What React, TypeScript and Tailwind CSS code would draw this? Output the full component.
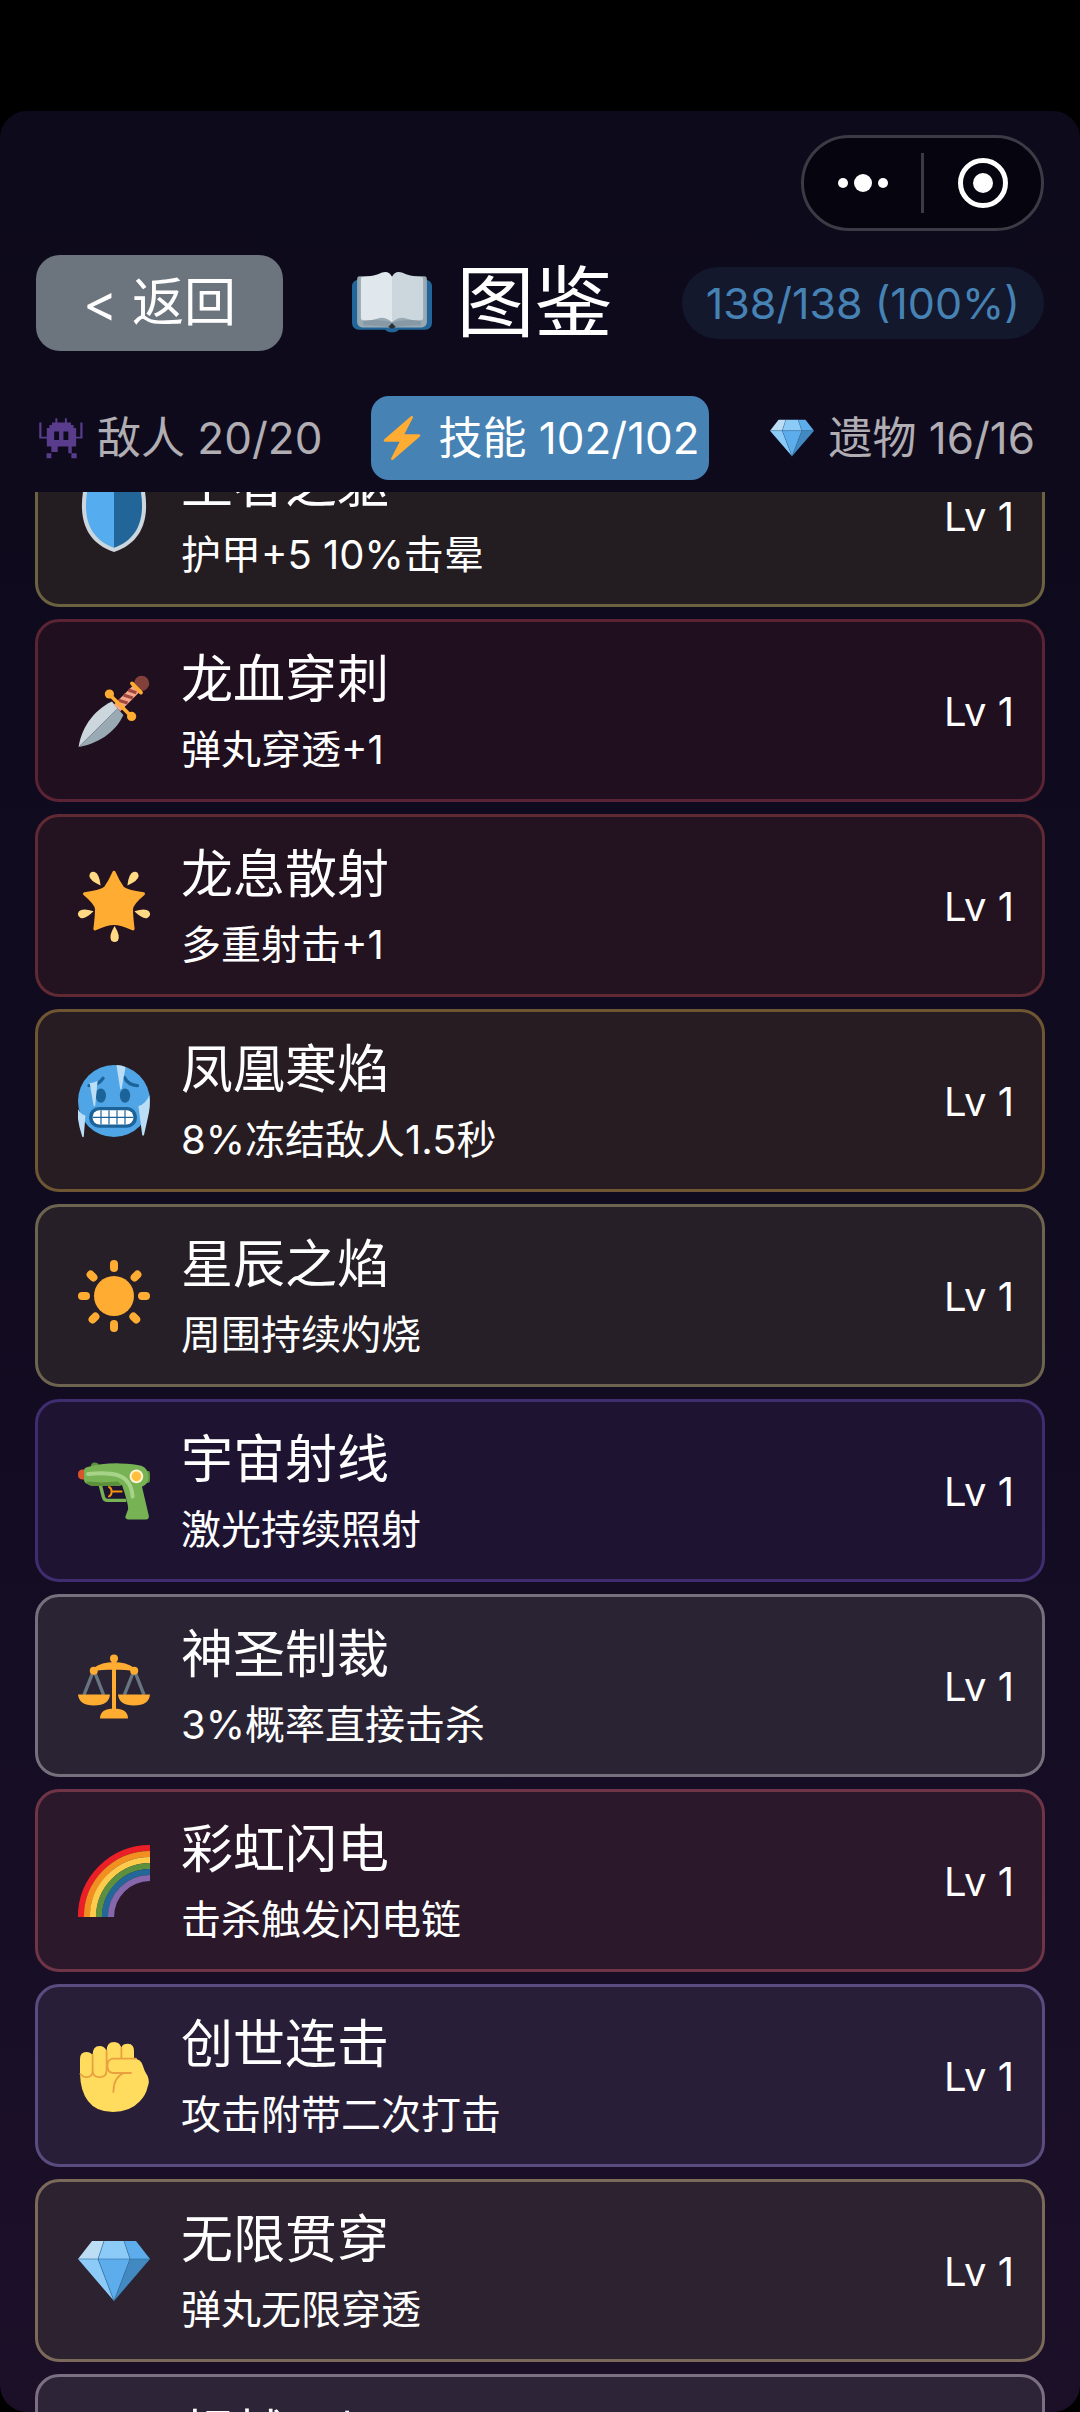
import { ReactNode, useState } from 'react'
import clsx from 'clsx'

function Emoji({ className, children }: { className?: string; children: ReactNode }) {
  return (
    <svg viewBox="0 0 36 36" className={clsx('shrink-0 overflow-visible', className)} aria-hidden="true">
      {children}
    </svg>
  )
}

const gem = (
  <>
    <path fill="#BDDDF4" d="M13 3H7l-7 9h10z" />
    <path fill="#5DADEC" d="M36 12l-7-9h-6l3 9z" />
    <path fill="#4289C1" d="M26 12h10L18 33z" />
    <path fill="#8CCAF7" d="M10 12H0l18 21zm3-9l-3 9h16l-3-9z" />
    <path fill="#5DADEC" d="M18 33l-8-21h16z" />
    <path fill="none" stroke="#2F6F9F" strokeWidth=".3" d="M0 12h36M13 3l-3 9 8 21 8-21-3-9" />
  </>
)

const zap = (
  <path
    fill="#FFAC33"
    d="M32.938 15.651C32.792 15.26 32.418 15 32 15H19.925L26.89 1.458c.219-.426.106-.947-.271-1.243C26.437.071 26.218 0 26 0c-.233 0-.466.082-.653.243L18 6.588 3.347 19.243c-.316.273-.43.714-.284 1.105S3.582 21 4 21h12.075L9.11 34.542c-.219.426-.106.947.271 1.243.182.144.401.215.619.215.233 0 .466-.082.653-.243L18 29.412l14.653-12.655c.317-.273.43-.714.285-1.106z"
  />
)

const monster = (
  <>
    <path
      fill="#593C8C"
      d="M13.4 1.8H15v3.6h6.2V1.8h1.6v3.6h3.4v2h2.1v2.4h2.1V17h3.4V5.4h1.8v13.1h-5.2V25h-3.6v5.5h4v4h-4.3v-4h-2.5V25h-3.2-4.3-1.2v4.5H10.1v5H6.2v-4h3.900V25H6.4v-6.5H.2V5.4H2V17h4.4V9.8h2.1V7.4h2.1v-2h2.8z"
    />
    <path fill="#0d0a1c" d="M12.400 12.600h4v7h-4zM20 12.600h4v7h-4z" />
  </>
)

const book = (
  <>
    <path fill="#226699" d="M3 7.5h30a3 3 0 0 1 3 3V27a3 3 0 0 1-3 3H21q-1 1.2-3 1.2T15 30H3a3 3 0 0 1-3-3V10.500a3 3 0 0 1 3-3z" />
    <path fill="#99AAB5" d="M3.500 6H18v23H4.500Q2.300 28.500 2.300 26.500V7.500Q2.300 6 3.500 6zM32.500 6H18v23h13.500q2.200-.5 2.200-2.500v-19Q33.700 6 32.500 6z" />
    <path fill="#8899A6" d="M5 25.500q8 0 13 1v2.700q-5-1.200-13-1.200zM31 25.500q-8 0-13 1v2.700q5-1.200 13-1.200z" />
    <path fill="#E1E8ED" d="M4 7.200Q4 6.200 5.500 6.200 10 6 13.500 4.300 16.700 3.300 18 6.300V26.800Q16 24.500 12.500 24.700 9 25.800 5.500 25.900 4 25.800 4 24.500z" />
    <path fill="#CCD6DD" d="M32 7.200q0-1-1.500-1Q26 6 22.500 4.300 19.300 3.300 18 6.300V26.800q2-2.300 5.500-2.100 3.500 1.100 7 1.200 1.500-.1 1.500-1.400z" />
    <path fill="#292F33" d="M18 27l1.700 1.800L18 29.600l-1.700-.8z" />
  </>
)

const shield = (
  <>
    <path fill="#CCD6DD" d="M33 3c-7-3-15-3-15-3S10 0 3 3C0 18 3 31 18 36c15-5 18-18 15-33z" />
    <path fill="#55ACEE" d="M18 33.900C6.400 29.700 2 19.800 4.800 4.400 11 2 18 2 18 2z" />
    <path fill="#226699" d="M18 33.900C29.600 29.700 34 19.800 31.200 4.400 25 2 18 2 18 2z" />
  </>
)

const dagger = (
  <>
    <path fill="#CCD6DD" d="M.3 36C1.500 27.500 7 18 17 13.300l2.800 3.400z" />
    <path fill="#99AAB5" d="M.3 36C9.500 34.500 18.500 29 22.700 20l-2.900-3.300z" />
    <path stroke="#F4A68A" strokeWidth="4.600" d="M19.500 16.500L29 7" />
    <path stroke="#A0483F" strokeWidth="1.600" d="M20.200 12.600l4.600 1.400M22.800 10l4.600 1.500M25.200 7.500l4 1.400" />
    <circle cx="31.800" cy="4.200" r="3.800" fill="#82403A" />
    <path stroke="#FFAC33" strokeWidth="1.900" strokeLinecap="round" d="M27 4.200l4.500 4.600M16 10l10.500 10.500" />
    <circle cx="15.700" cy="9.500" r="2.300" fill="#FFAC33" />
    <circle cx="26.800" cy="20.700" r="2.300" fill="#FFAC33" />
  </>
)

const drop = 'M0 0Q3 5 1.700 7.100 0 9-1.700 7.100-3 5 0 0z'

const star = (
  <>
    <path
      fill="#FFAC33"
      stroke="#FFAC33"
      strokeWidth="1.600"
      strokeLinejoin="round"
      d="M18 1.200Q20 5.800 22.300 9 24.200 10.800 32.700 11.900q-6 5-6 7.800 0 3 .8 9.700-6-2.700-9.500-2.700t-9.500 2.700q.8-6.700.8-9.700 0-2.800-6-7.800 8.500-1.100 10.400-2.900Q16 5.800 18 1.200z"
    />
    <g fill="#FFD983">
      <path d={drop} transform="translate(11.300 7.700) rotate(143)" />
      <path d={drop} transform="translate(24.700 7.700) rotate(-143)" />
      <path d={drop} transform="translate(7.800 20.600) rotate(76)" />
      <path d={drop} transform="translate(28.200 20.600) rotate(-76)" />
      <path d={drop} transform="translate(18.300 28)" />
    </g>
  </>
)

const coldFace = (
  <>
    <circle cx="18" cy="18" r="18" fill="#50A5E6" />
    <ellipse cx="11.400" cy="15.300" rx="2.600" ry="3.600" fill="#1C6399" />
    <ellipse cx="23.500" cy="15.300" rx="2.600" ry="3.600" fill="#1C6399" />
    <path fill="none" stroke="#1C6399" strokeWidth="1.700" strokeLinecap="round" d="M5.500 10.300Q10 10.300 12.500 6.700M23.200 6.300Q25 10 29.700 10.300" />
    <rect x="5.500" y="21" width="24" height="10.400" rx="5" fill="#1C6399" />
    <rect x="7.300" y="22.600" width="20.400" height="7.200" rx="3.400" fill="#fff" />
    <path stroke="#1C6399" strokeWidth=".6" d="M7.300 26.200h20.400M11.500 22.600v7.200M15.500 22.600v7.200M19.500 22.600v7.200M23.500 22.600v7.200" />
    <path
      fill="#BBDDF5"
      d="M5.800 8.900q2 .3 4-1L8.600 20.200q-.4.800-.8 0zM19.200 0q2.500 0 4.600 1l-2 11q-.4.600-.7 0zM0 22q1 2.300 3.700 3.300l-.8 10.500q-.4.600-.8 0Q.5 31 0 27zM30.200 20.500Q34 19.500 35.700 15q.6 6-.7 11l-2 9q-.5.700-.9 0z"
    />
  </>
)

const sun = (
  <>
    <circle cx="18" cy="18" r="10" fill="#FFAC33" />
    <path
      stroke="#FFAC33"
      strokeWidth="4"
      strokeLinecap="round"
      d="M18 2v2M18 32v2M2 18h2M32 18h2M6.300 7.300l1.400 1.400M27.700 28.300l1.400 1.400M29.700 7.300l-1.400 1.400M8.700 28.300l-1.400 1.400"
    />
  </>
)

const gun = (
  <>
    <path fill="#5C913B" d="M6.500 5.500q0-1.800 1.800-1.800T10.500 5l-1 1zM33 8h2.200q.8 0 .8 1.200v3.600q0 1-1 1.200h-2z" />
    <path fill="none" stroke="#77B255" strokeWidth="1.700" strokeLinejoin="round" d="M11 14.500l1.700 6.500q.5 1.700 2 1.700h9.500" />
    <path fill="none" stroke="#F4900C" strokeWidth="1" strokeLinecap="round" d="M15.500 16q1.300.4 1.300 2.300t-1.300 2.400M16.800 18.300h5" />
    <path fill="#D9542B" d="M3.500 7.300H2Q0 7.500 0 9.800T2 12.200h1.500z" />
    <path
      fill="#77B255"
      d="M4 6.200Q12 4 21 4.200q7 0 11 1.300 3.200 1.500 3.300 5.500 0 3.500-3.300 4.900l3.400 14.500q.2 1.800-1.400 1.800h-9q-1.700-.2-1.200-1.700l1.300-3.500q0-3-3.100-12H7q-3.800-.3-4-2.500V8q0-1.400 1-1.800z"
    />
    <path fill="#5C913B" d="M4 13.300q8 .8 16 0l1.800 2-1 .2H7q-2.200-.2-3-2.200z" />
    <path fill="none" stroke="#A6D388" strokeWidth="2" strokeLinecap="round" d="M5 9.500q15-1.500 19 3 3 3 3.300 8.300" />
    <circle cx="29.200" cy="10.700" r="3.400" fill="#FFF3D0" />
    <circle cx="29.200" cy="10.700" r="2.400" fill="#FFBE3D" />
  </>
)

const scales = (
  <>
    <path fill="none" stroke="#66757F" strokeWidth="1.700" d="M7.300 11.500L3 22.400M8.500 11.500l4.300 10.900M27.500 11.500l-4.300 10.900M28.700 11.500L33 22.400" />
    <path
      fill="#FFAC33"
      d="M0 22.200h16q-.5 5.500-8 5.500t-8-5.500zM20 22.200h16q-.5 5.500-8 5.500t-8-5.500zM11 34.300q0-5 7-5t7 5zM17 5h2v26h-2zM7.500 9.200Q12 6 18 6t10.500 3.200v1.500Q24 9.800 18 9.800t-10.500.9z"
    />
    <circle cx="18" cy="4.200" r="2" fill="#FFAC33" />
    <circle cx="7.900" cy="10.400" r="2" fill="#FFAC33" />
    <circle cx="28.100" cy="10.400" r="2" fill="#FFAC33" />
  </>
)

const rainbow = (
  <g fill="none" strokeWidth="3.100">
    <path stroke="#EB2027" d="M1.500 36A34.500 34.500 0 0 1 36 1.500" />
    <path stroke="#F19020" d="M4.500 36A31.500 31.500 0 0 1 36 4.500" />
    <path stroke="#FFCB4C" d="M7.500 36A28.500 28.500 0 0 1 36 7.500" />
    <path stroke="#5C903F" d="M10.500 36A25.500 25.500 0 0 1 36 10.500" />
    <path stroke="#226798" d="M13.500 36A22.500 22.500 0 0 1 36 13.500" />
    <path stroke="#8767AC" d="M16.500 36A19.500 19.500 0 0 1 36 16.500" />
  </g>
)

const fist = (
  <>
    <path
      fill="#FFDC5D"
      d="M1 9.500Q1 6 4.200 6q2 0 3.100 1.500Q7.300 3 10.800 3q2.500 0 3.500 2.500Q14.300 1 18 1q3 0 3.700 3Q22 1.900 25 1.900q3 .1 3 3.600v3.700q3.500.3 4.300 3.300 1 3.500 2.500 5.500 1.200 3 0 5.500-.8 4-4 7.300Q26 36 17.500 36 9 36 5 30.500 1.200 25.500 1 17z"
    />
    <path
      fill="none"
      stroke="#E9A03F"
      strokeWidth=".9"
      strokeLinecap="round"
      d="M1.200 17q1.300 1.600 3 1.600 3.100 0 3.100-3V7.500M7.300 15q0 3.600 3.500 3.600t3.500-3.600V5.500M21.700 4v5.300M29 9.300H17.500q-2.800.2-2.800 3.600t2.800 3.600h9M23 16.500q-5.300 2-5.300 9.500"
    />
  </>
)

const skills = [
  { icon: shield, name: '王者之躯', desc: '护甲+5 10%击晕', color: 'bg-[#231d22] border-[#6b6240]' },
  { icon: dagger, name: '龙血穿刺', desc: '弹丸穿透+1', color: 'bg-[#1f0f1f] border-[#5b2434]' },
  { icon: star, name: '龙息散射', desc: '多重射击+1', color: 'bg-[#231220] border-[#602a34]' },
  { icon: coldFace, name: '凤凰寒焰', desc: '8%冻结敌人1.5秒', color: 'bg-[#261c22] border-[#6e5632]' },
  { icon: sun, name: '星辰之焰', desc: '周围持续灼烧', color: 'bg-[#261f28] border-[#6d6450]' },
  { icon: gun, name: '宇宙射线', desc: '激光持续照射', color: 'bg-[#1e1432] border-[#3f2d70]' },
  { icon: scales, name: '神圣制裁', desc: '3%概率直接击杀', color: 'bg-[#2a2333] border-[#76707c]' },
  { icon: rainbow, name: '彩虹闪电', desc: '击杀触发闪电链', color: 'bg-[#2c182b] border-[#6f3547]' },
  { icon: fist, name: '创世连击', desc: '攻击附带二次打击', color: 'bg-[#281e38] border-[#5b4c80]' },
  { icon: gem, name: '无限贯穿', desc: '弹丸无限穿透', color: 'bg-[#2d222f] border-[#7b6a5a]' },
  { icon: star, name: '超越一切', desc: '全属性提升', color: 'bg-[#2d2438] border-[#7b6f82]' },
]

const tabs = [
  { id: 'enemy', icon: monster, label: '敌人 20/20' },
  { id: 'skill', icon: zap, label: '技能 102/102' },
  { id: 'relic', icon: gem, label: '遗物 16/16' },
]

export default function App() {
  const [activeTab, setActiveTab] = useState('skill')

  return (
    <div className="h-screen bg-black pt-[111px] font-['Inter','Noto_Sans_CJK_SC',sans-serif] text-white">
      <div className="flex h-full flex-col overflow-hidden rounded-[27px] bg-linear-to-b from-[#0d0a1b] via-[#110b20] to-[#1c1029] pt-6">
        <div className="flex justify-end px-9">
          <div className="flex h-24 w-[243px] items-center rounded-full border-3 border-[#3b3a45] bg-[#06040e]">
            <button aria-label="更多" className="flex flex-1 items-center justify-center">
              <svg viewBox="0 0 52 20" className="h-5 w-13" fill="#fff">
                <circle cx="6" cy="10" r="5" />
                <circle cx="26" cy="10" r="9" />
                <circle cx="46" cy="10" r="5" />
              </svg>
            </button>
            <span className="h-15 w-[3px] bg-[#3b3a45]" />
            <button aria-label="关闭" className="flex flex-1 items-center justify-center">
              <svg viewBox="0 0 50 50" className="size-[50px]">
                <circle cx="25" cy="25" r="22.500" fill="none" stroke="#fff" strokeWidth="5" />
                <circle cx="25" cy="25" r="10" fill="#fff" />
              </svg>
            </button>
          </div>
        </div>

        <header className="mt-6 flex items-center justify-between px-9">
          <button className="h-24 w-[247px] rounded-3xl bg-[#6c757d] text-[52px] leading-24">&lt; 返回</button>
          <h1 className="flex items-center gap-6 text-[78px] leading-24">
            <Emoji className="size-20">{book}</Emoji>
            图鉴
          </h1>
          <div className="h-18 rounded-full bg-[#13182d] px-6 text-[43px] leading-18 text-[#4682b4]">138/138 (100%)</div>
        </header>

        <nav className="mt-[45px] flex gap-10 pr-9 pl-[30px]">
          {tabs.map((tab) => (
            <button
              key={tab.id}
              onClick={() => setActiveTab(tab.id)}
              className={clsx(
                'flex h-21 items-center gap-3.5 rounded-[18px] px-[9px] text-[44px] whitespace-nowrap last:ml-auto',
                activeTab === tab.id ? 'bg-[#4682b4] text-white' : 'text-[#b0adb3]'
              )}
            >
              <Emoji className="size-11">{tab.icon}</Emoji>
              {tab.label}
            </button>
          ))}
        </nav>

        <main className="mt-3 min-h-0 flex-1 overflow-hidden px-[35px]">
          {/* list is scrolled part way into the first card */}
          <ul className="-mt-17 flex flex-col gap-3">
            {skills.map((skill) => (
              <li
                key={skill.name}
                className={clsx('flex h-[183px] shrink-0 items-center rounded-3xl border-3 pr-7 pl-10', skill.color)}
              >
                <Emoji className="size-18">{skill.icon}</Emoji>
                <div className="ml-[31px] flex-1 pt-[3px]">
                  <h2 className="text-[52px] leading-[76px]">{skill.name}</h2>
                  <p className="text-[40px] leading-16">{skill.desc}</p>
                </div>
                <span className="pt-[3px] text-[40px]">Lv 1</span>
              </li>
            ))}
          </ul>
        </main>
      </div>
    </div>
  )
}
